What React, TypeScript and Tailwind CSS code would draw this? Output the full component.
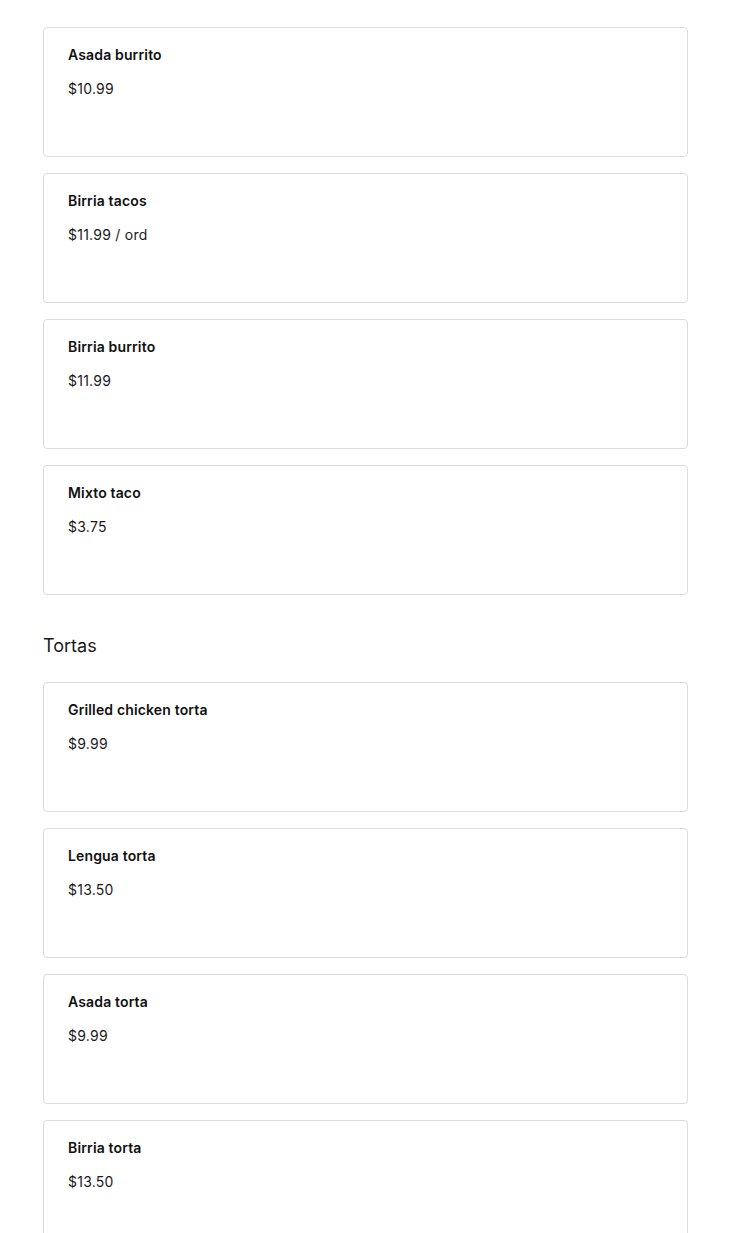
import React from 'react';

interface Item {
  name: string;
  price: string;
}

const sections: { title?: string; items: Item[] }[] = [
  {
    items: [
      { name: 'Asada burrito', price: '$10.99' },
      { name: 'Birria tacos', price: '$11.99 / ord' },
      { name: 'Birria burrito', price: '$11.99' },
      { name: 'Mixto taco', price: '$3.75' },
    ],
  },
  {
    title: 'Tortas',
    items: [
      { name: 'Grilled chicken torta', price: '$9.99' },
      { name: 'Lengua torta', price: '$13.50' },
      { name: 'Asada torta', price: '$9.99' },
      { name: 'Birria torta', price: '$13.50' },
    ],
  },
];

function MenuCard({ name, price }: Item) {
  return (
    <div className="h-[130px] rounded-[4px] border border-[#dcdcdc] bg-white px-6 pt-[17px]">
      <div className="text-[14px] leading-5 font-semibold tracking-[0.15px] text-[#111]">{name}</div>
      <div className="mt-[14px] text-[14px] leading-5 tracking-[0.25px] text-[#1a1a1a]">{price}</div>
    </div>
  );
}

export default function App() {
  return (
    <div
      className="min-h-screen bg-white pl-[43px] pr-[42px] pt-[27px] pb-10"
      style={{ fontFamily: 'Inter, "Noto Sans", sans-serif' }}
    >
      {sections.map((section, i) => (
        <div key={i}>
          {section.title && (
            <h2 className="mt-[37px] mb-[22px] text-[18px] leading-7 font-normal text-[#1a1a1a]">
              {section.title}
            </h2>
          )}
          <div className="flex flex-col gap-4">
            {section.items.map((item) => (
              <MenuCard key={item.name} {...item} />
            ))}
          </div>
        </div>
      ))}
    </div>
  );
}
